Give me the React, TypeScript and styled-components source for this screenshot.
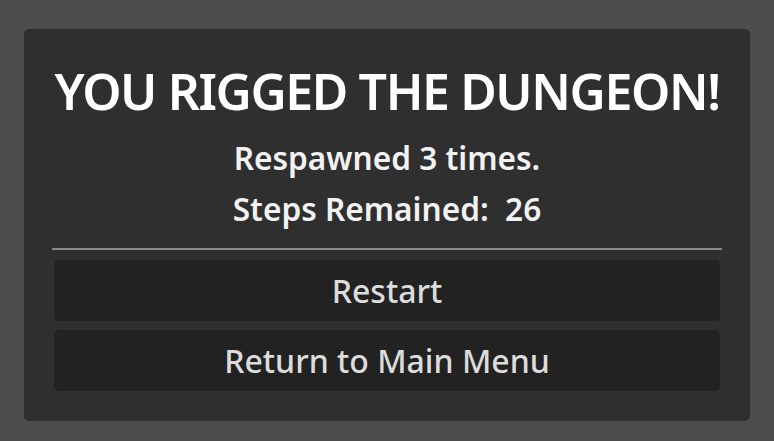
import styled, { createGlobalStyle } from 'styled-components'

const GlobalStyle = createGlobalStyle`
  html, body {
    margin: 0;
    padding: 0;
    background-color: #4d4d4d;
  }
  body {
    font-family: 'Noto Sans', 'Open Sans', sans-serif;
  }
`

const Screen = styled.div`
  width: 774px;
  height: 441px;
  padding: 29px 24px 20px;
  box-sizing: border-box;
`

const Panel = styled.div`
  width: 726px;
  height: 392px;
  box-sizing: border-box;
  background-color: #2f2f2f;
  border-radius: 5px;
  padding: 32px 28px 0;
  display: flex;
  flex-direction: column;
  align-items: stretch;
`

const Title = styled.h1`
  margin: 0 0 11px;
  color: #ffffff;
  font-size: 50px;
  font-weight: 600;
  letter-spacing: -1.4px;
  line-height: 60px;
  text-align: center;
  white-space: nowrap;
`

const Stat = styled.p`
  margin: 0;
  color: #f2f2f2;
  font-size: 31.6px;
  font-weight: 600;
  line-height: 51px;
  text-align: center;
  white-space: pre;
`

const Divider = styled.hr`
  margin: 14px 0 10px;
  border: 0;
  height: 2px;
  background-color: #8a8a8a;
`

const Buttons = styled.div`
  display: flex;
  flex-direction: column;
  gap: 9px;
  padding: 0 2px;
`

const MenuButton = styled.button`
  height: 61px;
  border: 0;
  border-radius: 5px;
  background-color: #222222;
  color: #dcdcdc;
  font-family: 'Noto Sans', 'Open Sans', sans-serif;
  font-size: 32px;
  font-weight: 500;
  cursor: pointer;
`

export default function App() {
  const respawns = 3
  const steps = 26

  return (
    <Screen>
      <GlobalStyle />
      <Panel>
        <Title>YOU RIGGED THE DUNGEON!</Title>
        <Stat>Respawned {respawns} times.</Stat>
        <Stat>{`Steps Remained:  ${steps}`}</Stat>
        <Divider />
        <Buttons>
          <MenuButton>Restart</MenuButton>
          <MenuButton>Return to Main Menu</MenuButton>
        </Buttons>
      </Panel>
    </Screen>
  )
}
